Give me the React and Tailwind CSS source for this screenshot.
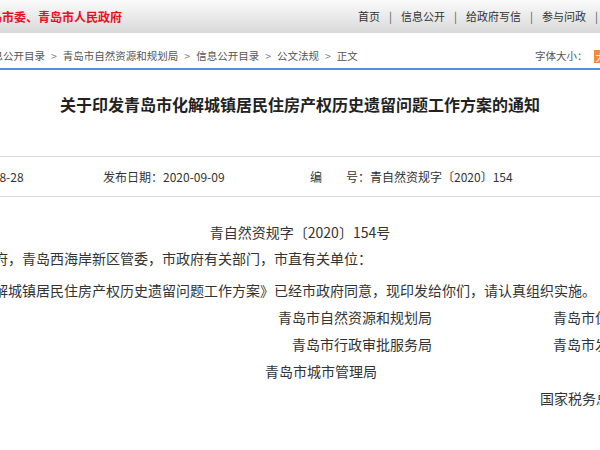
/**
 * 青岛市政府信息公开 - 正文页
 */
const font = { fontFamily: '"Noto Sans CJK SC", "Liberation Sans", sans-serif' }

const navItems = ['首页', '信息公开', '给政府写信', '参与问政', '无障碍']
const crumbs = ['信息公开目录', '青岛市自然资源和规划局', '信息公开目录', '公文法规', '正文']

export default function App() {
  return (
    <div className="w-[600px] h-[450px] overflow-hidden bg-white text-[#333]" style={font}>
      <div className="w-[1000px] ml-[-200px]">
        {/* Top bar */}
        <header className="h-[33px] flex items-center bg-linear-to-b from-[#fbfbfb] to-[#d9d9d9]">
          <div className="w-[558px] pl-[154px] text-[12px] font-bold text-[#e8101a] whitespace-nowrap">
            中共青岛市委、青岛市人民政府
          </div>
          <nav className="flex items-center text-[11px] text-[#333] whitespace-nowrap">
            {navItems.map((item, i) => (
              <span key={i} className="flex items-center">
                {i > 0 && <span className="px-[9px] text-[#555]">|</span>}
                {item}
              </span>
            ))}
          </nav>
        </header>

        {/* Breadcrumb */}
        <div className="h-[37px] flex items-center pt-[11px] border-b-2 border-[#4a90e2] text-[10.5px] text-[#555] whitespace-nowrap">
          <div className="w-[735px] pl-[182px] flex items-center">
            {crumbs.map((c, i) => (
              <span key={i} className="flex items-center">
                {i > 0 && <span className="px-[6px] text-[#777]">&gt;</span>}
                {c}
              </span>
            ))}
          </div>
          <div className="flex items-center gap-[6px] text-[#555]">
            <span>字体大小：</span>
            <span className="w-[14px] h-[13px] bg-[#f08a3c] text-white text-[10px] leading-[13px] text-center">大</span>
            <span>中</span>
            <span>小</span>
          </div>
        </div>

        {/* Title */}
        <h1 className="mt-[22px] text-center text-[16px] leading-[24px] font-bold text-[#222] whitespace-nowrap">
          关于印发青岛市化解城镇居民住房产权历史遗留问题工作方案的通知
        </h1>

        {/* Meta */}
        <div className="mt-[40px] h-[41px] border-y border-[#dcdcdc] flex items-center pl-[96px] text-[12px] text-[#333] whitespace-nowrap">
          <span className="w-[207px] pl-[6px]">成文日期：2020-08-28</span>
          <span className="w-[207px]">发布日期：2020-09-09</span>
          <span>编&#12288;&#12288;号：青自然资规字〔2020〕154</span>
        </div>

        {/* Body */}
        <div className="text-[14px] text-[#333] whitespace-nowrap">
          <p className="mt-[23px] leading-[24px] text-center">青自然资规字〔2020〕154号</p>
          <p className="pl-[68px] leading-[28px]">
            &#12288;&#12288;各区、市人民政府，青岛西海岸新区管委，市政府有关部门，市直有关单位：
          </p>
          <p className="mt-[4px] pl-[68px] leading-[28px]">
            &#12288;&#12288;现将《青岛市化解城镇居民住房产权历史遗留问题工作方案》已经市政府同意，现印发给你们，请认真组织实施。
          </p>

          <div className="leading-[27px]">
            <div className="flex">
              <span className="w-[632px] text-right">青岛市自然资源和规划局</span>
              <span className="ml-[121px]">青岛市住房和城乡建设局</span>
            </div>
            <div className="flex">
              <span className="w-[632px] text-right">青岛市行政审批服务局</span>
              <span className="ml-[121px]">青岛市发展和改革委员会</span>
            </div>
            <div className="flex">
              <span className="w-[577px] text-right">青岛市城市管理局</span>
            </div>
            <div className="flex">
              <span className="ml-[740px]">国家税务总局青岛市税务局</span>
            </div>
          </div>
        </div>
      </div>
    </div>
  )
}
